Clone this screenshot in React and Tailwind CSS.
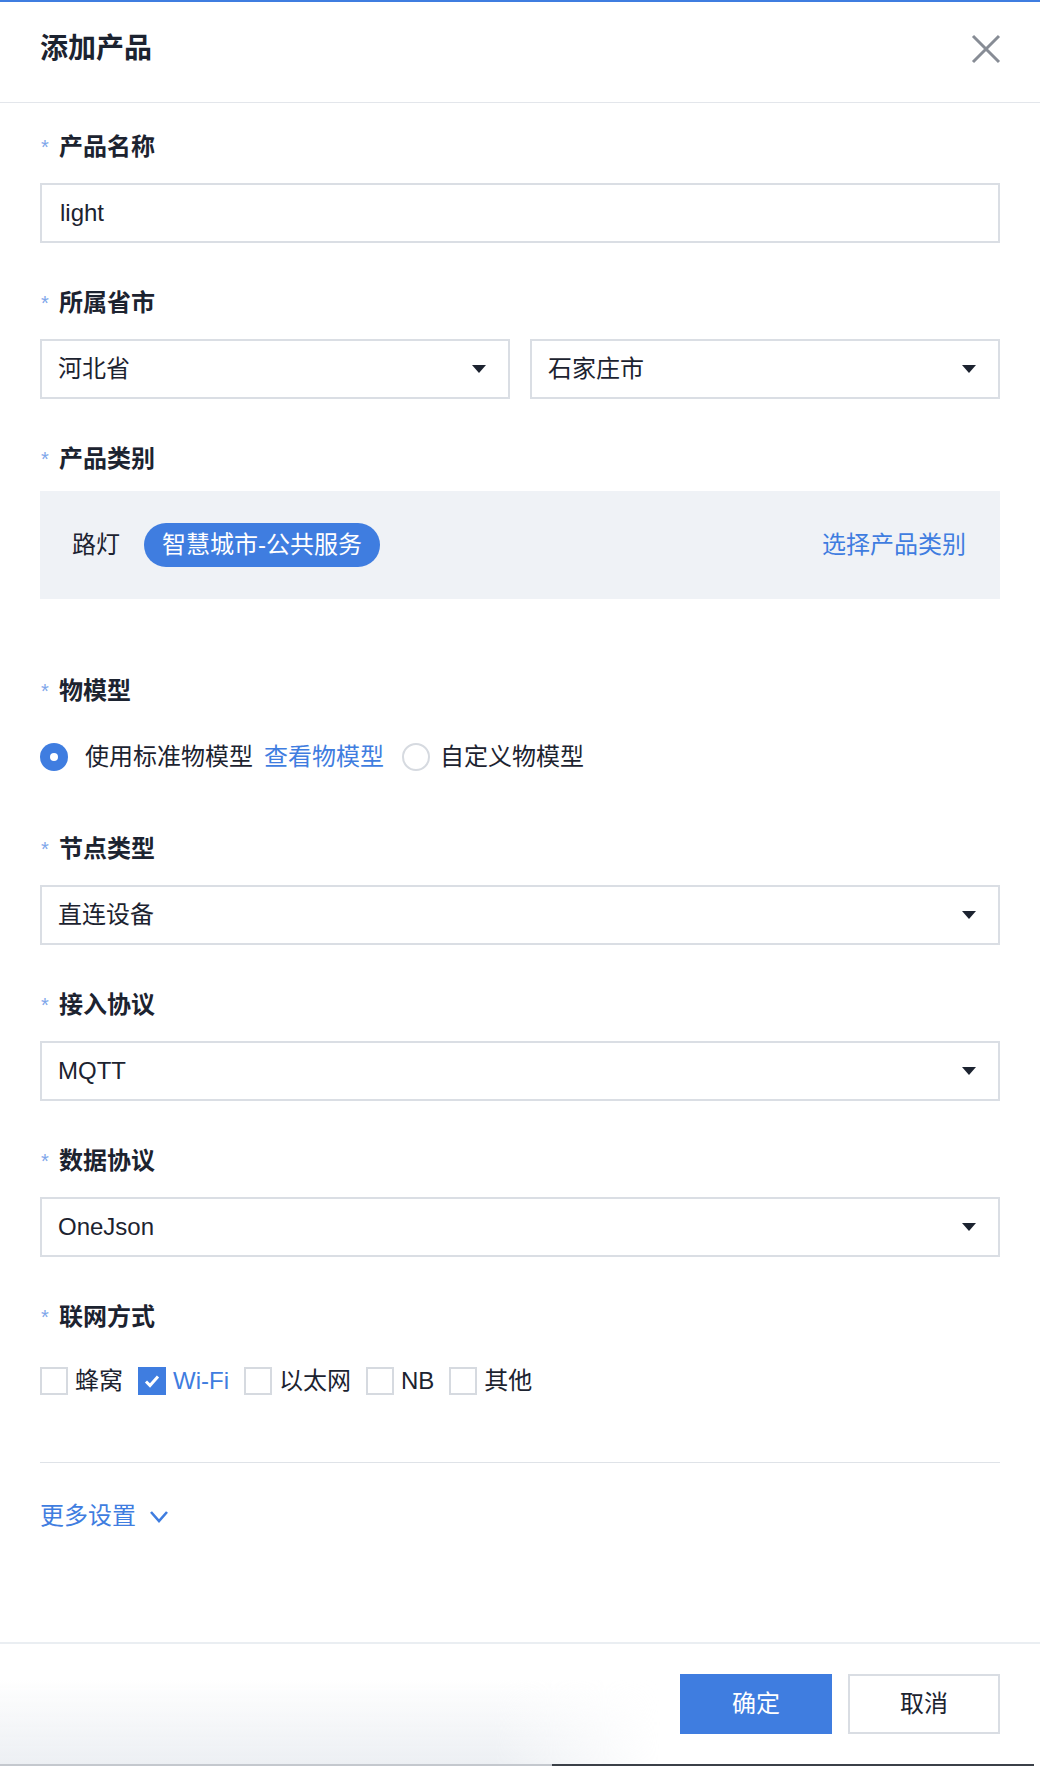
import { useState } from "react";

const BLUE = "#3f7de0";

function Label({ children }) {
  return (
    <div className="flex items-start h-[24px]">
      <span className="w-[19px] pl-[1px] text-[20px] leading-[20px] mt-[2px] text-[#7ea6ea]">*</span>
      <span className="text-[24px] leading-[24px] font-bold text-[#1c2330]">{children}</span>
    </div>
  );
}

function Caret() {
  return (
    <svg width="14" height="8" viewBox="0 0 14 8">
      <path d="M0 0 H14 L7 8 Z" fill="#1c2330" />
    </svg>
  );
}

function Select({ value, className = "" }) {
  return (
    <div
      className={`h-[60px] border-2 border-[#dadee4] bg-white flex items-center justify-between pl-[16px] pr-[22px] ${className}`}
    >
      <span className="text-[24px] leading-none text-[#1c2330]">{value}</span>
      <Caret />
    </div>
  );
}

function Checkbox({ label, checked }) {
  return (
    <div className="flex items-center gap-[7px]">
      {checked ? (
        <span className="w-[28px] h-[28px] bg-[#3f7de0] flex items-center justify-center">
          <svg width="16" height="14" viewBox="0 0 16 14">
            <path d="M2 7.5 L6 11.5 L14 2.5" fill="none" stroke="#fff" strokeWidth="3" />
          </svg>
        </span>
      ) : (
        <span className="w-[28px] h-[28px] border-2 border-[#d6dae0] bg-white" />
      )}
      <span className={`text-[24px] leading-none ${checked ? "text-[#3f7de0]" : "text-[#1c2330]"}`}>
        {label}
      </span>
    </div>
  );
}

function App() {
  const [name, setName] = useState("light");
  const [model, setModel] = useState("std");

  return (
    <div className="relative w-[1040px] h-[1766px] bg-white flex flex-col border-t-2 border-[#3f7de0] font-['Liberation_Sans','Noto_Sans_CJK_SC',sans-serif] overflow-hidden">
      {/* header */}
      <div className="h-[101px] shrink-0 flex items-center justify-between px-[40px] pb-[7px] border-b border-[#e3e6eb]">
        <h1 className="text-[28px] leading-none font-bold text-[#1c2330]">添加产品</h1>
        <svg width="30" height="30" viewBox="0 0 30 30" className="mr-[-1px]">
          <path d="M2 2 L28 28 M28 2 L2 28" stroke="#878c95" strokeWidth="3" />
        </svg>
      </div>

      {/* body */}
      <div className="flex-1 px-[40px] pt-[32px]">
        <Label>产品名称</Label>
        <input
          value={name}
          onChange={(e) => setName(e.target.value)}
          className="mt-[24px] w-full h-[60px] border-2 border-[#dadee4] pl-[18px] text-[24px] text-[#1c2330] outline-none"
        />

        <div className="mt-[48px]">
          <Label>所属省市</Label>
        </div>
        <div className="mt-[24px] grid grid-cols-2 gap-[20px]">
          <Select value="河北省" />
          <Select value="石家庄市" />
        </div>

        <div className="mt-[48px]">
          <Label>产品类别</Label>
        </div>
        <div className="mt-[20px] h-[108px] bg-[#eff2f6] flex items-center justify-between pl-[32px] pr-[34px]">
          <div className="flex items-center gap-[24px]">
            <span className="text-[24px] leading-none text-[#1c2330]">路灯</span>
            <span className="h-[44px] px-[18px] rounded-full bg-[#3f7de0] text-white text-[24px] flex items-center">
              智慧城市-公共服务
            </span>
          </div>
          <span className="text-[24px] leading-none text-[#3f7de0]">选择产品类别</span>
        </div>

        <div className="mt-[80px]">
          <Label>物模型</Label>
        </div>
        <div className="mt-[40px] h-[28px] flex items-center text-[24px] leading-none text-[#1c2330]">
          <button onClick={() => setModel("std")} className="flex items-center">
            {model === "std" ? (
              <span className="w-[28px] h-[28px] rounded-full bg-[#3f7de0] flex items-center justify-center">
                <span className="w-[8px] h-[8px] rounded-full bg-white" />
              </span>
            ) : (
              <span className="w-[28px] h-[28px] rounded-full border-2 border-[#d6dae0]" />
            )}
            <span className="ml-[17px]">使用标准物模型</span>
          </button>
          <span className="ml-[11px] text-[#3f7de0]">查看物模型</span>
          <button onClick={() => setModel("custom")} className="ml-[18px] flex items-center">
            {model === "custom" ? (
              <span className="w-[28px] h-[28px] rounded-full bg-[#3f7de0] flex items-center justify-center">
                <span className="w-[8px] h-[8px] rounded-full bg-white" />
              </span>
            ) : (
              <span className="w-[28px] h-[28px] rounded-full border-2 border-[#d6dae0]" />
            )}
            <span className="ml-[10px]">自定义物模型</span>
          </button>
        </div>

        <div className="mt-[66px]">
          <Label>节点类型</Label>
        </div>
        <Select value="直连设备" className="mt-[24px]" />

        <div className="mt-[48px]">
          <Label>接入协议</Label>
        </div>
        <Select value="MQTT" className="mt-[24px]" />

        <div className="mt-[48px]">
          <Label>数据协议</Label>
        </div>
        <Select value="OneJson" className="mt-[24px]" />

        <div className="mt-[48px]">
          <Label>联网方式</Label>
        </div>
        <div className="mt-[38px] flex items-center gap-[15px]">
          <Checkbox label="蜂窝" />
          <Checkbox label="Wi-Fi" checked />
          <Checkbox label="以太网" />
          <Checkbox label="NB" />
          <Checkbox label="其他" />
        </div>

        <div className="mt-[67px] h-px bg-[#dfe3e8]" />

        <div className="mt-[41px] h-[24px] flex items-center gap-[13px] text-[#3f7de0]">
          <span className="text-[24px] leading-none">更多设置</span>
          <svg width="20" height="13" viewBox="0 0 20 13">
            <path d="M2 2 L10 11 L18 2" fill="none" stroke={BLUE} strokeWidth="2.6" />
          </svg>
        </div>
      </div>

      {/* footer */}
      <div className="h-[124px] shrink-0 border-t-2 border-[#eaeef2] flex items-start justify-end gap-[16px] px-[40px] pt-[30px]">
        <button className="relative z-10 w-[152px] h-[60px] bg-[#3f7de0] text-white text-[24px]">确定</button>
        <button className="relative z-10 w-[152px] h-[60px] border-2 border-[#d9dde3] bg-white text-[#1c2330] text-[24px]">
          取消
        </button>
      </div>

      {/* window shadow at the bottom edge */}
      <div className="absolute left-0 bottom-0 w-[660px] h-[88px] bg-linear-to-b from-white/0 to-[#eceff3] [mask-image:linear-gradient(to_right,black_75%,transparent)]" />
      <div className="absolute left-0 bottom-0 w-[552px] h-[2px] bg-[#c4c8ce]" />
      <div className="absolute left-[552px] right-[6px] bottom-0 h-[2px] bg-[#3b4048]" />
    </div>
  );
}

export default App;
